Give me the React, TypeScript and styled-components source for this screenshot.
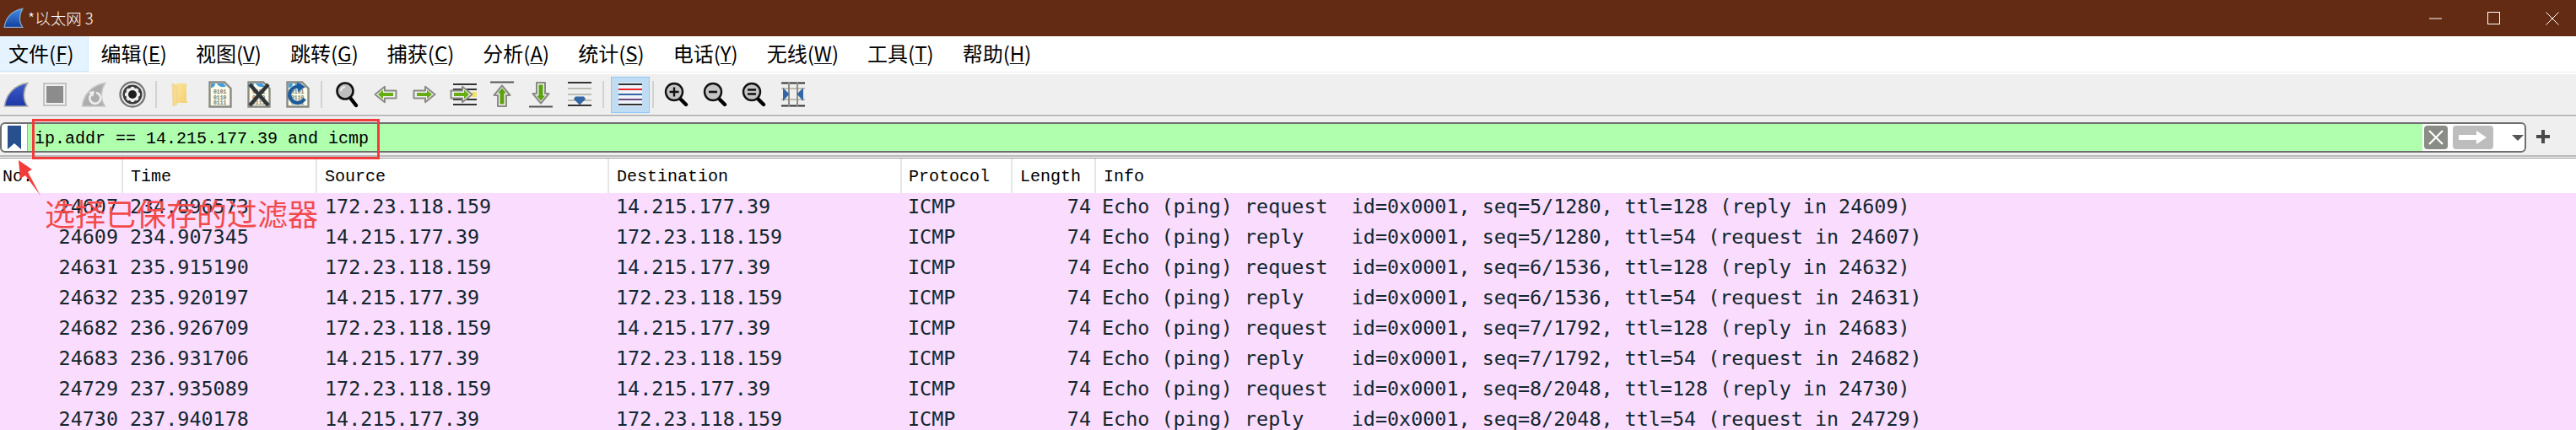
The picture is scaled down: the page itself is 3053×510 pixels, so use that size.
import React from "react";
import styled, { createGlobalStyle } from "styled-components";

const CJK = `"Noto Sans CJK SC", "Liberation Sans", sans-serif`;
const COLUMNS = "146px 230px 346px 347px 131px 99px 1fr";

const Global = createGlobalStyle`
  html, body { margin: 0; padding: 0; background: #fff; }
  body { width: 3053px; height: 510px; overflow: hidden; font-family: ${CJK}; }
`;

const Window = styled.div`
  position: relative;
  width: 3053px;
  height: 510px;
  overflow: hidden;
  background: #fff;
  display: flex;
  flex-direction: column;
`;

const TitleBar = styled.div`
  flex: 0 0 43px;
  background: #632b13;
  display: flex;
  align-items: center;
  padding-left: 4px;
  color: #fff;
`;
const TitleText = styled.span`
  margin-left: 5px;
  font-size: 18.5px;
  font-weight: 300;
  line-height: 43px;
  white-space: pre;
`;
const WinControls = styled.div`
  margin-left: auto;
  display: flex;
  align-items: center;
  gap: 54px;
  padding-right: 20px;
`;

const MenuBar = styled.div`
  flex: 0 0 43px;
  box-sizing: border-box;
  display: flex;
  align-items: stretch;
  background: #fff;
  border-bottom: 1px solid #eee;
`;
const MenuItem = styled.div<{ $active?: boolean }>`
  box-sizing: border-box;
  height: 42px;
  padding: 0 ${(p) => (p.$active ? 16 : 13)}px 0 ${(p) => (p.$active ? 10 : 12)}px;
  margin-right: ${(p) => (p.$active ? 3 : 9)}px;
  line-height: 40px;
  font-size: 24px;
  color: #000;
  white-space: pre;
  background: ${(p) => (p.$active ? "#e5f3ff" : "transparent")};
  border: 1px solid ${(p) => (p.$active ? "#cce8ff" : "transparent")};
  border-width: ${(p) => (p.$active ? "0 1px 1px 0" : "0")};
  u { text-underline-offset: 2px; text-decoration-thickness: 1px; }
`;

const Toolbar = styled.div`
  margin-top: 2px;
  flex: 0 0 48px;
  box-sizing: border-box;
  display: flex;
  align-items: center;
  gap: 8px;
  background: #efefef;
`;
const ToolButton = styled.div<{ $selected?: boolean; $after?: number }>`
  box-sizing: border-box;
  flex: 0 0 ${(p) => (p.$selected ? 46 : 38)}px;
  height: ${(p) => (p.$selected ? 43 : 38)}px;
  margin-right: ${(p) => (p.$selected ? -5 : p.$after ?? 0)}px;
  display: flex;
  align-items: center;
  justify-content: center;
  background: ${(p) => (p.$selected ? "#c0dcf3" : "transparent")};
  border: ${(p) => (p.$selected ? "1px solid #90c8f6" : "0")};
  svg { display: block; }
`;
const ToolSep = styled.div<{ $after?: number }>`
  flex: 0 0 2px;
  height: 32px;
  margin-right: ${(p) => p.$after ?? 0}px;
  background: #d2d2d2;
`;
const GrayRule = styled.div`
  flex: 0 0 2px;
  background: #b9b9b9;
`;

const FilterRow = styled.div`
  flex: 0 0 46px;
  box-sizing: border-box;
  border-top: 1px solid #f8f8f8;
  background: #efefef;
  display: flex;
  align-items: flex-start;
  padding-top: 6px;
`;
const FilterBox = styled.div`
  flex: 0 0 2994px;
  box-sizing: border-box;
  height: 36px;
  border: 2px solid #6f6f6f;
  border-radius: 6px;
  display: flex;
  align-items: stretch;
  background: #fff;
  overflow: hidden;
`;
const BookmarkCell = styled.div`
  flex: 0 0 31px;
  box-sizing: border-box;
  border-right: 1px solid #aaa;
  display: flex;
  align-items: center;
  justify-content: center;
`;
const FilterInput = styled.div`
  flex: 1;
  background: #afffaf;
  font-family: "Liberation Mono", monospace;
  font-size: 20px;
  line-height: 36px;
  color: #000;
  padding-left: 8px;
  white-space: pre;
`;
const FilterActions = styled.div`
  flex: 0 0 119px;
  display: flex;
  align-items: center;
  padding-left: 2px;
  gap: 6px;
`;
const ClearBtn = styled.div`
  flex: 0 0 28px;
  height: 28px;
  border-radius: 4px;
  background: #8a8c86;
  display: flex;
  align-items: center;
  justify-content: center;
`;
const ApplyBtn = styled.div`
  flex: 0 0 48px;
  height: 28px;
  border-radius: 4px;
  background: #bdbdbd;
  display: flex;
  align-items: center;
  justify-content: center;
`;
const DropArrow = styled.div`
  margin-left: 16px;
  width: 0;
  height: 0;
  border-left: 7px solid transparent;
  border-right: 7px solid transparent;
  border-top: 7px solid #555;
`;
const PlusCell = styled.div`
  flex: 1;
  display: flex;
  justify-content: center;
  padding: 9px 20px 0 0;
`;

const DoubleRule = styled.div`
  flex: 0 0 4px;
  box-sizing: border-box;
  background: #fff;
  border-top: 2px solid #b9b9b9;
  border-bottom: 1px solid #8f8f8f;
`;

const HeaderRow = styled.div`
  flex: 0 0 41px;
  display: grid;
  grid-template-columns: ${COLUMNS};
  background: #fff;
`;
const HeaderCell = styled.div<{ $pad: number }>`
  box-sizing: border-box;
  padding: 2px 0 0 ${(p) => p.$pad}px;
  border-right: 2px solid #e6e6e6;
  font-family: "Liberation Mono", monospace;
  font-size: 20px;
  line-height: 39px;
  color: #000;
  &:last-child { border-right: 0; }
`;

const PacketRow = styled.div`
  flex: 0 0 36px;
  display: grid;
  grid-template-columns: ${COLUMNS};
  background: #f9dcfe;
  color: #12272e;
  font-family: "DejaVu Sans Mono", monospace;
  font-size: 23.4px;
  line-height: 32px;
  white-space: pre;
`;
const Cell = styled.div<{ $right?: boolean; $pad?: number }>`
  box-sizing: border-box;
  padding: ${(p) => (p.$right ? `0 ${p.$pad ?? 6}px 0 0` : `0 0 0 ${p.$pad ?? 8}px`)};
  text-align: ${(p) => (p.$right ? "right" : "left")};
`;

const FilterMark = styled.div`
  position: absolute;
  left: 38px;
  top: 141px;
  width: 412px;
  height: 48px;
  box-sizing: border-box;
  border: 3px solid #f23c3c;
`;
const ArrowMark = styled.svg`
  position: absolute;
  left: 16px;
  top: 186px;
`;
const AnnotationText = styled.div`
  position: absolute;
  left: 53px;
  top: 227px;
  font-size: 36px;
  line-height: 50px;
  color: #f24a4a;
  white-space: pre;
`;

/* ---------- icons ---------- */
const Fin = ({ size = 30, id, top, bottom, stroke }: { size?: number; id: string; top: string; bottom: string; stroke: string }) => (
  <svg width={size} height={size + 1} viewBox="0 0 30 31">
    <defs>
      <linearGradient id={id} x1="0" y1="0" x2="0" y2="1">
        <stop offset="0" stopColor={top} />
        <stop offset="1" stopColor={bottom} />
      </linearGradient>
    </defs>
    <path d="M1.5 29 C3 15 13 4 28.5 1.5 C24 9 22 20 28.5 29 Z" fill={`url(#${id})`} stroke={stroke} strokeWidth="1.6" />
  </svg>
);

const StopIcon = () => (
  <svg width="28" height="28" viewBox="0 0 28 28">
    <rect x="1" y="1" width="26" height="26" fill="#efefef" stroke="#c4c4c4" strokeWidth="2" />
    <rect x="4" y="4" width="20" height="20" fill="#8c8c8c" />
  </svg>
);

const RestartIcon = () => (
  <svg width="30" height="31" viewBox="0 0 30 31">
    <path d="M1.5 29 C3 15 13 4 28.5 1.5 C24 9 22 20 28.5 29 Z" fill="#adadad" stroke="#c6c6c6" strokeWidth="1.6" />
    <path d="M18 13 A6.5 6.5 0 1 1 12 15" fill="none" stroke="#efefef" strokeWidth="2.6" />
    <path d="M9.5 12 L16 11 L14 18 Z" fill="#efefef" />
  </svg>
);

const GearIcon = () => {
  const teeth = Array.from({ length: 8 }, (_, i) => i * 45);
  return (
    <svg width="32" height="32" viewBox="0 0 32 32">
      <circle cx="16" cy="16" r="14.5" fill="#efefef" stroke="#777" strokeWidth="2.4" />
      <circle cx="16" cy="16" r="11.5" fill="#3a3a3a" />
      <circle cx="16" cy="16" r="8" fill="#efefef" />
      {teeth.map((a) => (
        <rect key={a} x="14.2" y="7" width="3.6" height="5" fill="#efefef" transform={`rotate(${a} 16 16)`} />
      ))}
      <circle cx="16" cy="16" r="5" fill="#1e1e1e" />
    </svg>
  );
};

const FolderIcon = () => (
  <svg width="20" height="30" viewBox="0 0 20 30">
    <defs>
      <linearGradient id="folderFill" x1="0" y1="0" x2="1" y2="1">
        <stop offset="0" stopColor="#fbe59a" />
        <stop offset="1" stopColor="#f4cf72" />
      </linearGradient>
    </defs>
    <path d="M6 2 H18 V22 L19 25 H6 Z" fill="url(#folderFill)" />
    <path d="M1 2 L7 5 V27 L2 29 Z" fill="#f7da8c" stroke="#e8cf95" strokeWidth="0.6" />
  </svg>
);

const DocBase = ({ children, bits = true }: { children?: React.ReactNode; bits?: boolean }) => (
  <svg width="28" height="32" viewBox="0 0 28 32">
    <path d="M1.5 1.5 H19 L26.5 9 V30.5 H1.5 Z" fill="#fbfbe8" stroke="#8a8a84" strokeWidth="2.4" />
    <path d="M3 3 H8 C8 7 5 8 3 8 Z" fill="#3f9fe0" />
    <path d="M10 3 H18 L21 6.5 C17 8 12 7 10 3 Z" fill="#3f9fe0" />
    {bits && (
      <g fontFamily="'Liberation Mono', monospace" fontSize="6.4" fill="#77776e" fontWeight="700">
        <text x="6" y="15">0101</text>
        <text x="6" y="21.5">0110</text>
        <text x="6" y="28">0111</text>
      </g>
    )}
    {children}
  </svg>
);

const MagnifierIcon = () => (
  <svg width="30" height="32" viewBox="0 0 30 32">
    <path d="M19 20 L26 29" stroke="#000" strokeWidth="4.4" strokeLinecap="round" />
    <circle cx="13" cy="12" r="9.5" fill="#bdbdbd" stroke="#111" strokeWidth="2.6" />
    <path d="M8 12 A5.5 5.5 0 0 1 13 7" fill="none" stroke="#eee" strokeWidth="2" />
  </svg>
);

const GREEN_OUT = "#8a8a84";
const ArrowRightIcon = ({ w = 28 }: { w?: number }) => (
  <svg width={w} height="22" viewBox="0 0 28 22">
    <path d="M1.5 6.5 H15 V1.8 L26.5 11 L15 20.2 V15.5 H1.5 Z" fill="#efefef" stroke={GREEN_OUT} strokeWidth="2" strokeLinejoin="round" />
    <path d="M5 9 H17 V5.8 L23 11 L17 16.2 V13 H5 Z" fill="#65ad12" />
  </svg>
);
const ArrowLeftIcon = () => (
  <svg width="28" height="22" viewBox="0 0 28 22">
    <g transform="matrix(-1 0 0 1 28 0)">
      <path d="M1.5 6.5 H15 V1.8 L26.5 11 L15 20.2 V15.5 H1.5 Z" fill="#efefef" stroke={GREEN_OUT} strokeWidth="2" strokeLinejoin="round" />
      <path d="M5 9 H17 V5.8 L23 11 L17 16.2 V13 H5 Z" fill="#65ad12" />
    </g>
  </svg>
);
const GotoIcon = () => (
  <svg width="32" height="32" viewBox="0 0 32 32">
    <path d="M4 4 H32 M4 10 H32 M4 22 H32 M4 28 H32" stroke="#333" strokeWidth="2" />
    <rect x="26" y="13" width="6" height="6" fill="#f6e36a" />
    <g transform="translate(0 5)">
      <path d="M1.5 6.5 H15 V1.8 L26.5 11 L15 20.2 V15.5 H1.5 Z" fill="#efefef" stroke={GREEN_OUT} strokeWidth="2" strokeLinejoin="round" />
      <path d="M5 9 H17 V5.8 L23 11 L17 16.2 V13 H5 Z" fill="#65ad12" />
    </g>
  </svg>
);
const TopIcon = () => (
  <svg width="28" height="32" viewBox="0 0 28 32">
    <path d="M0 1.5 H28" stroke="#555" strokeWidth="2" />
    <path d="M9 30 V17 H4.5 L14 5.5 L23.5 17 H19 V30 Z" fill="#efefef" stroke={GREEN_OUT} strokeWidth="2" strokeLinejoin="round" />
    <path d="M11.5 27.5 V14.5 H9 L14 8.5 L19 14.5 H16.5 V27.5 Z" fill="#5aa30f" />
  </svg>
);
const BottomIcon = () => (
  <svg width="28" height="32" viewBox="0 0 28 32">
    <path d="M0 30.5 H28" stroke="#555" strokeWidth="2" />
    <path d="M9 2 V15 H4.5 L14 26.5 L23.5 15 H19 V2 Z" fill="#efefef" stroke={GREEN_OUT} strokeWidth="2" strokeLinejoin="round" />
    <path d="M11.5 4.5 V17.5 H9 L14 23.5 L19 17.5 H16.5 V4.5 Z" fill="#5aa30f" />
  </svg>
);
const AutoScrollIcon = () => (
  <svg width="28" height="32" viewBox="0 0 28 32">
    <path d="M0 2 H28 M0 29 H28" stroke="#333" strokeWidth="2" />
    <path d="M0 9 H28 M0 16 H28 M0 23 H28" stroke="#bcbcb2" strokeWidth="2" />
    <path d="M13 19 H23 L25 22 L18 29 L11 22 Z" fill="#3465a4" transform="translate(-4 -0.5)" />
  </svg>
);
const ColorizeIcon = () => (
  <svg width="28" height="28" viewBox="0 0 28 28">
    <rect x="0" y="0" width="28" height="28" fill="#eef4fa" />
    <path d="M0 2 H28 M0 26 H28" stroke="#333" strokeWidth="2" />
    <path d="M0 8 H28" stroke="#e8262a" strokeWidth="2" />
    <path d="M0 14 H28" stroke="#3465a4" strokeWidth="2" />
    <path d="M0 20 H28" stroke="#6b4a7f" strokeWidth="2" />
  </svg>
);
const ZoomIcon = ({ kind }: { kind: "in" | "out" | "eq" }) => (
  <svg width="30" height="30" viewBox="0 0 30 30">
    <path d="M18 19 L26 27" stroke="#000" strokeWidth="4.4" strokeLinecap="round" />
    <circle cx="12" cy="12" r="10" fill="#c4c4c4" stroke="#111" strokeWidth="2.4" />
    {kind === "in" && <path d="M6.5 12 H17.5 M12 6.5 V17.5" stroke="#111" strokeWidth="2.4" />}
    {kind === "out" && <path d="M7 12 H17" stroke="#111" strokeWidth="2.6" />}
    {kind === "eq" && <path d="M7 9.5 H17 M7 14.5 H17" stroke="#111" strokeWidth="2.4" />}
  </svg>
);
const ResizeIcon = () => (
  <svg width="28" height="30" viewBox="0 0 28 30">
    <path d="M0 1.5 H28 M0 28.5 H28" stroke="#333" strokeWidth="2" />
    <path d="M0 8 H28 M0 21 H28" stroke="#bcbcb2" strokeWidth="2" />
    <path d="M9 1 V29 M19 1 V29" stroke="#8e8e86" strokeWidth="2" />
    <path d="M2 7 L9.5 14.5 L2 23 Z" fill="#3465a4" />
    <path d="M26 7 L18.5 14.5 L26 23 Z" fill="#3465a4" />
  </svg>
);

const BookmarkIcon = () => (
  <svg width="18" height="30" viewBox="0 0 18 30">
    <path d="M1 1 H17 V29 L9 22 L1 29 Z" fill="#27508c" />
  </svg>
);

const Minimize = () => (
  <svg width="15" height="2" viewBox="0 0 15 2"><path d="M0 1 H15" stroke="#fff" strokeWidth="1" /></svg>
);
const Maximize = () => (
  <svg width="15" height="15" viewBox="0 0 15 15"><rect x="0.5" y="0.5" width="14" height="14" fill="none" stroke="#fff" /></svg>
);
const Close = () => (
  <svg width="16" height="16" viewBox="0 0 16 16"><path d="M0.5 0.5 L15.5 15.5 M15.5 0.5 L0.5 15.5" stroke="#fff" strokeWidth="1" /></svg>
);

/* ---------- data ---------- */
const menus: [string, string][] = [
  ["文件", "F"], ["编辑", "E"], ["视图", "V"], ["跳转", "G"], ["捕获", "C"], ["分析", "A"],
  ["统计", "S"], ["电话", "Y"], ["无线", "W"], ["工具", "T"], ["帮助", "H"],
];

const SRC = "172.23.118.159";
const DST = "14.215.177.39";
const req = (seq: string, r: number) => `Echo (ping) request  id=0x0001, seq=${seq}, ttl=128 (reply in ${r})`;
const rep = (seq: string, r: number) => `Echo (ping) reply    id=0x0001, seq=${seq}, ttl=54 (request in ${r})`;

const packets: [number, string, string, string, string][] = [
  [24607, "234.896573", SRC, DST, req("5/1280", 24609)],
  [24609, "234.907345", DST, SRC, rep("5/1280", 24607)],
  [24631, "235.915190", SRC, DST, req("6/1536", 24632)],
  [24632, "235.920197", DST, SRC, rep("6/1536", 24631)],
  [24682, "236.926709", SRC, DST, req("7/1792", 24683)],
  [24683, "236.931706", DST, SRC, rep("7/1792", 24682)],
  [24729, "237.935089", SRC, DST, req("8/2048", 24730)],
  [24730, "237.940178", DST, SRC, rep("8/2048", 24729)],
];

const headers: [string, number][] = [
  ["No.", 3], ["Time", 9], ["Source", 9], ["Destination", 9], ["Protocol", 8], ["Length", 9], ["Info", 9],
];

export default function App() {
  return (
    <Window>
      <Global />
      <TitleBar>
        <Fin size={24} id="logoFin" top="#3f8fe8" bottom="#123f9c" stroke="#8fa6c4" />
        <TitleText>*以太网 3</TitleText>
        <WinControls>
          <Minimize />
          <Maximize />
          <Close />
        </WinControls>
      </TitleBar>

      <MenuBar>
        {menus.map(([label, key], i) => (
          <MenuItem key={key} $active={i === 0}>
            {label}(<u>{key}</u>)
          </MenuItem>
        ))}
      </MenuBar>

      <Toolbar>
        <ToolButton><Fin id="tStart" top="#3d5fc8" bottom="#1c36a6" stroke="#a5a5a5" /></ToolButton>
        <ToolButton><StopIcon /></ToolButton>
        <ToolButton><RestartIcon /></ToolButton>
        <ToolButton><GearIcon /></ToolButton>
        <ToolSep />
        <ToolButton $after={2}><FolderIcon /></ToolButton>
        <ToolButton><DocBase /></ToolButton>
        <ToolButton>
          <DocBase>
            <path d="M3 4 L25 29 M25 4 L3 29" stroke="#30353a" strokeWidth="4.4" />
          </DocBase>
        </ToolButton>
        <ToolButton>
          <DocBase>
            <path d="M22 21 A9.5 9.5 0 1 1 15 7" fill="none" stroke="#1f5a9c" strokeWidth="4.4" />
            <path d="M13 1.5 L23 7 L14 13 Z" fill="#1f5a9c" />
          </DocBase>
        </ToolButton>
        <ToolSep $after={2} />
        <ToolButton><MagnifierIcon /></ToolButton>
        <ToolButton><ArrowLeftIcon /></ToolButton>
        <ToolButton><ArrowRightIcon /></ToolButton>
        <ToolButton><GotoIcon /></ToolButton>
        <ToolButton><TopIcon /></ToolButton>
        <ToolButton><BottomIcon /></ToolButton>
        <ToolButton><AutoScrollIcon /></ToolButton>
        <ToolSep />
        <ToolButton $selected><ColorizeIcon /></ToolButton>
        <ToolSep />
        <ToolButton><ZoomIcon kind="in" /></ToolButton>
        <ToolButton><ZoomIcon kind="out" /></ToolButton>
        <ToolButton><ZoomIcon kind="eq" /></ToolButton>
        <ToolButton><ResizeIcon /></ToolButton>
      </Toolbar>
      <GrayRule />

      <FilterRow>
        <FilterBox>
          <BookmarkCell><BookmarkIcon /></BookmarkCell>
          <FilterInput>ip.addr == 14.215.177.39 and icmp</FilterInput>
          <FilterActions>
            <ClearBtn>
              <svg width="20" height="20" viewBox="0 0 20 20">
                <path d="M2 2 L18 18 M18 2 L2 18" stroke="#fff" strokeWidth="2.2" />
              </svg>
            </ClearBtn>
            <ApplyBtn>
              <svg width="34" height="16" viewBox="0 0 34 16">
                <path d="M0 5 H21 V0 L33 8 L21 16 V11 H0 Z" fill="#fff" />
              </svg>
            </ApplyBtn>
            <DropArrow />
          </FilterActions>
        </FilterBox>
        <PlusCell>
          <svg width="16" height="16" viewBox="0 0 16 16">
            <path d="M8 0 V16 M0 8 H16" stroke="#4a4a4a" strokeWidth="4" />
          </svg>
        </PlusCell>
      </FilterRow>
      <DoubleRule />

      <HeaderRow>
        {headers.map(([h, pad]) => (
          <HeaderCell key={h} $pad={pad}>{h}</HeaderCell>
        ))}
      </HeaderRow>

      {packets.map(([no, time, src, dst, info]) => (
        <PacketRow key={no}>
          <Cell $right>{no}</Cell>
          <Cell>{time}</Cell>
          <Cell $pad={9}>{src}</Cell>
          <Cell>{dst}</Cell>
          <Cell $pad={7}>ICMP</Cell>
          <Cell $right>74</Cell>
          <Cell $pad={7}>{info}</Cell>
        </PacketRow>
      ))}

      <FilterMark />
      <ArrowMark width="36" height="50" viewBox="16 186 36 50">
        <polygon points="22,190 38,201 33,204 48,232 30,208 24,212" fill="#f23c3c" />
      </ArrowMark>
      <AnnotationText>选择已保存的过滤器</AnnotationText>
    </Window>
  );
}
